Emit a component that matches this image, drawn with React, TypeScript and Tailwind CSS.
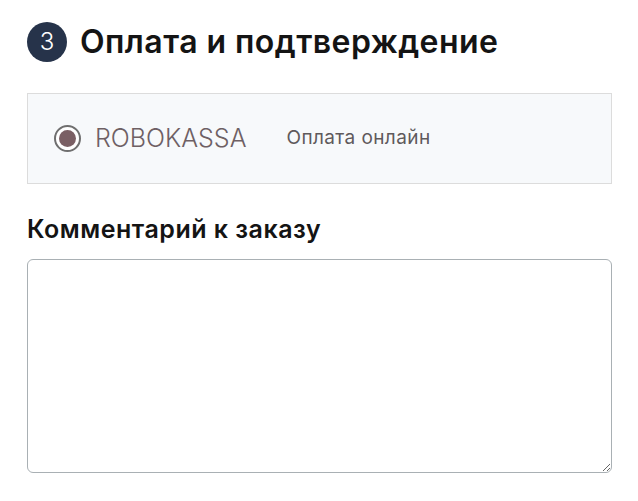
export default function App() {
  return (
    <div className="min-h-screen bg-white px-[27px] pt-[22px] text-[#141414] [font-family:Inter,'Noto_Sans',sans-serif]">
      <div className="flex items-center gap-[13px]">
        <div className="flex h-[40px] w-[40px] items-center justify-center rounded-full bg-[#26334a] text-[24px] font-light text-white">
          3
        </div>
        <h2 className="text-[32px] font-semibold leading-[40px] tracking-[0.45px]">Оплата и подтверждение</h2>
      </div>

      <div className="mt-[31px] flex h-[91px] w-[585px] items-center border border-[#dcdcdc] bg-[#f7f9fb] pl-[26px]">
        <span className="flex h-[27px] w-[27px] items-center justify-center rounded-full border-2 border-[#6f6f6f] bg-white">
          <span className="h-[17px] w-[17px] rounded-full bg-[#7a5f64]" />
        </span>
        <span className="ml-[14px] text-[25px] font-light text-[#6e6064]">ROBOKASSA</span>
        <span className="ml-[40px] text-[19px] tracking-[0.4px] text-[#5f5a5c]">Оплата онлайн</span>
      </div>

      <h3 className="mt-[29px] text-[25px] font-semibold leading-[32px] tracking-[0.5px]">Комментарий к заказу</h3>

      <textarea className="mt-[14px] block h-[214px] w-[585px] resize-y rounded-[6px] border border-[#a9b0b4] bg-white" />
    </div>
  );
}
